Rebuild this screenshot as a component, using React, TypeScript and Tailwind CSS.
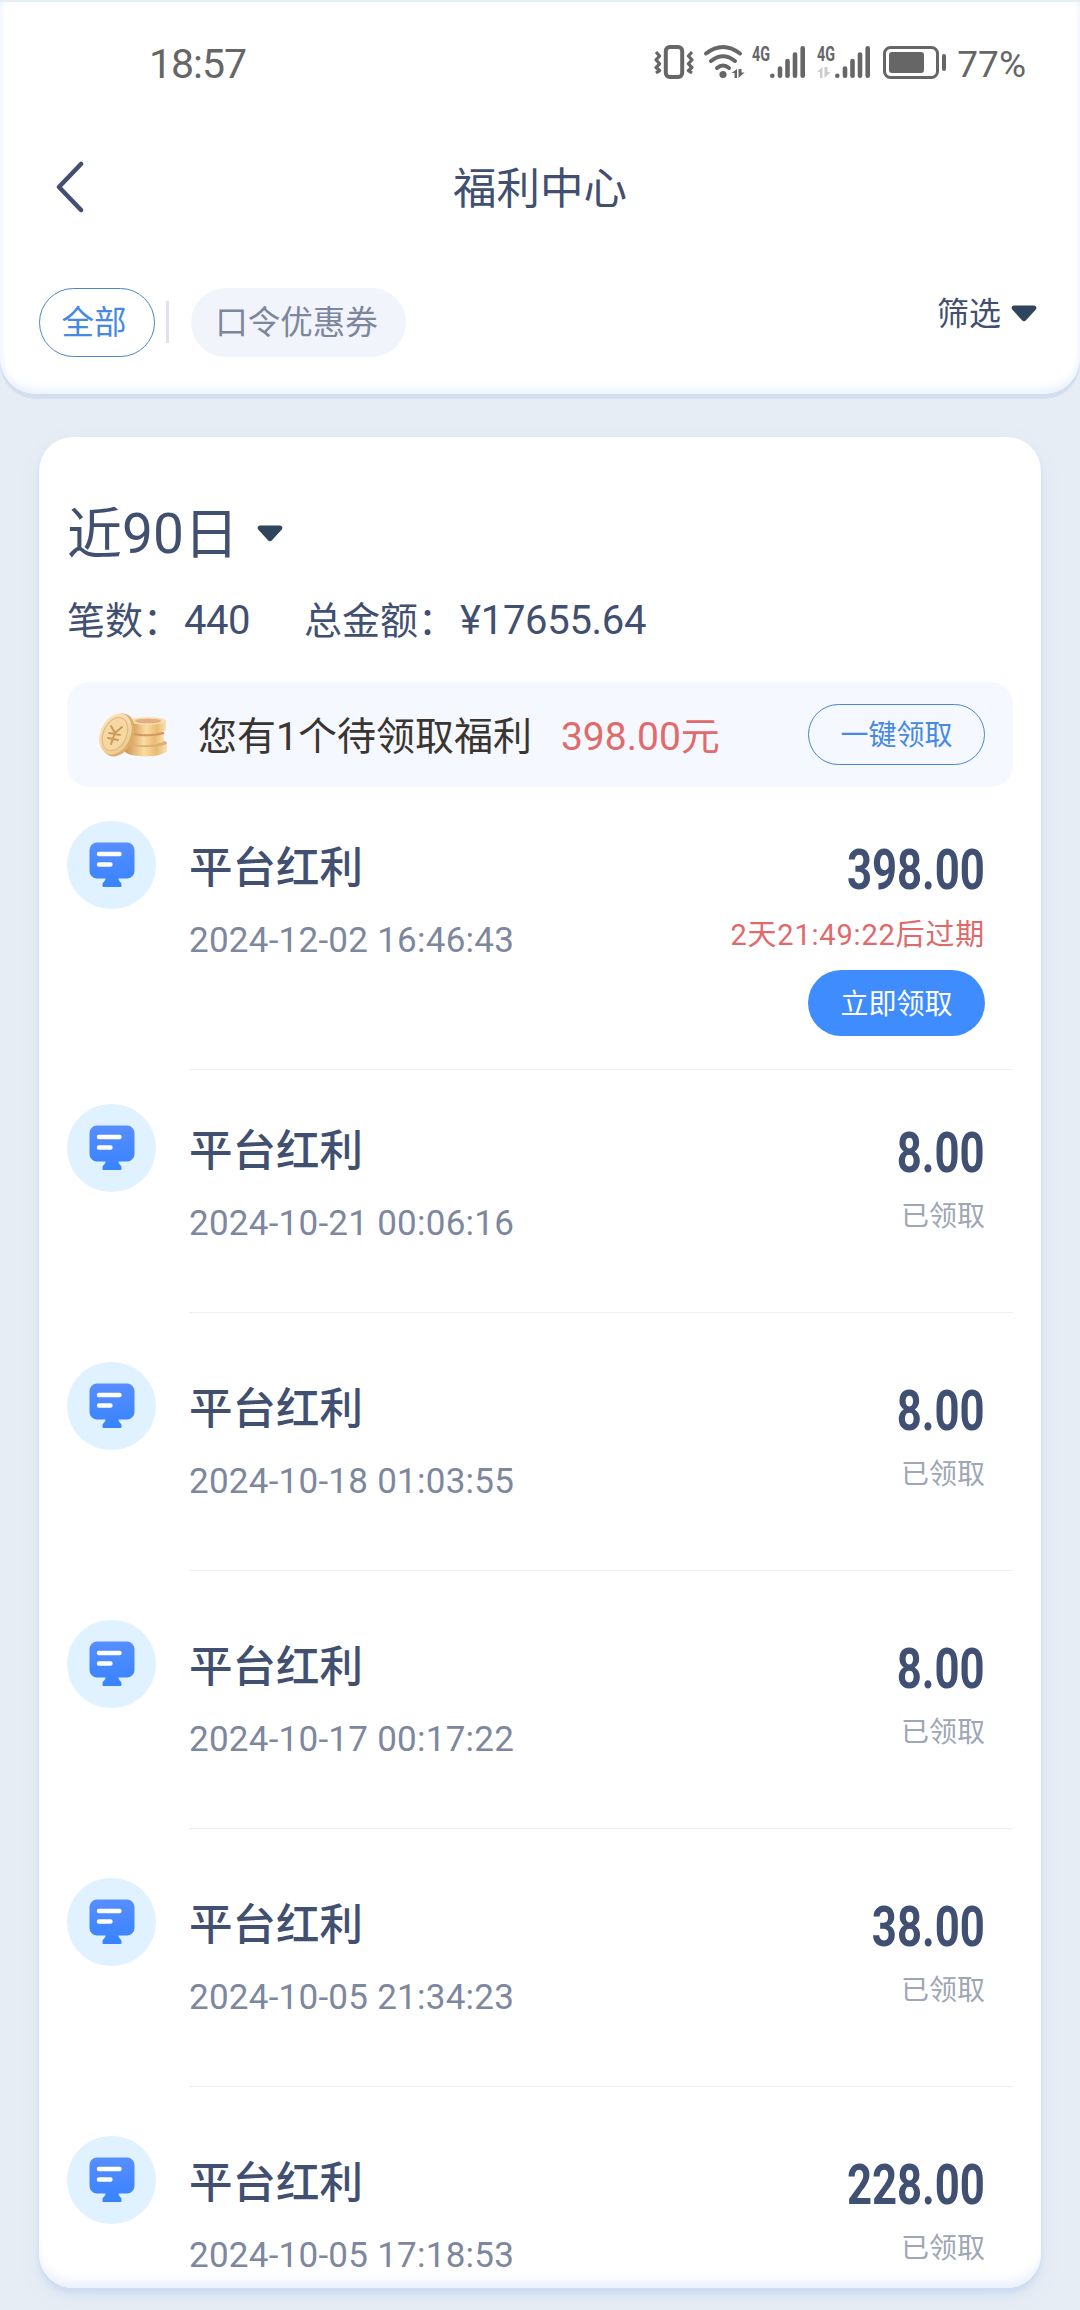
import clsx from 'clsx';

type Bonus = {
  time: string;
  amount: string;
  expire?: string;
};

const bonuses: Bonus[] = [
  { time: '2024-12-02 16:46:43', amount: '398.00', expire: '2天21:49:22后过期' },
  { time: '2024-10-21 00:06:16', amount: '8.00' },
  { time: '2024-10-18 01:03:55', amount: '8.00' },
  { time: '2024-10-17 00:17:22', amount: '8.00' },
  { time: '2024-10-05 21:34:23', amount: '38.00' },
  { time: '2024-10-05 17:18:53', amount: '228.00' },
];

function SignalBars() {
  return (
    <g strokeWidth="4.6" strokeLinecap="round">
      <path d="M2.3 30.7v.1M10 23.5v7.2M17.5 16v14.7M25 9.5v21.2M32.7 3.3v27.4" />
    </g>
  );
}

function StatusIcons() {
  return (
    <svg width="294" height="44" viewBox="0 -8 294 44" fill="none" stroke="#666" strokeLinejoin="round">
      {/* vibrate */}
      <rect x="11.8" y="2" width="16.4" height="30" rx="4" strokeWidth="4" />
      <path d="M2 7l3.6 4L2 14.8l3.6 4L2 22.6l3.6 3L2 28M38 7l-3.6 4 3.6 3.8-3.6 4 3.6 3.8-3.6 3L38 28" strokeWidth="3.2" />
      {/* wifi */}
      <g transform="translate(50 0)">
        <path d="M2 8.500Q19 -4.500 36 8.500M7 16Q19 6.500 31 16M13 23Q19 18 25 23" strokeWidth="4" strokeLinecap="round" />
        <circle cx="19" cy="29.500" r="3.600" fill="#666" stroke="none" />
        <path d="M27.500 28l5.500-4v9h-2.500v-5zM34.500 24v9l6-5.500h-3V24z" fill="#666" stroke="none" />
      </g>
      {/* sim 1 */}
      <text x="98" y="15.500" textLength="18" lengthAdjust="spacingAndGlyphs" fill="#666" stroke="none" className="text-[20px] font-bold">4G</text>
      <g transform="translate(116 0)">
        <SignalBars />
      </g>
      {/* sim 2 */}
      <text x="163" y="15.500" textLength="18" lengthAdjust="spacingAndGlyphs" fill="#666" stroke="none" className="text-[20px] font-bold">4G</text>
      <path d="M163 27l5.500-5v11H166v-6zM170.500 22v11l6-6h-3v-5z" fill="#ccc" stroke="none" />
      <g transform="translate(181 0)">
        <SignalBars />
      </g>
      {/* battery */}
      <rect x="230.500" y="2.500" width="53" height="30" rx="6" strokeWidth="3" />
      <rect x="235" y="7" width="35" height="21" rx="3" fill="#666" stroke="none" />
      <path d="M290 11v13" strokeWidth="4" strokeLinecap="round" />
    </svg>
  );
}

function Caret() {
  return (
    <svg width="26" height="17" viewBox="0 0 26 17" fill="#2f455c">
      <path d="M3.200 0.500h19.600c2.400 0 3.400 2.400 1.800 4.200l-9.400 10.300c-1.400 1.600-3 1.600-4.400 0L1.400 4.700C-0.200 2.900 0.800 0.500 3.200 0.500z" />
    </svg>
  );
}

function Coins() {
  return (
    <svg width="72" height="47" viewBox="0 0 72 47">
      <defs>
        <linearGradient id="edge" x1="0" x2="1" y1="0" y2="0">
          <stop offset="0" stopColor="#cf9350" />
          <stop offset="0.45" stopColor="#fbdc9f" />
          <stop offset="0.75" stopColor="#e9bb72" />
          <stop offset="1" stopColor="#f9e0b4" />
        </linearGradient>
        <linearGradient id="face" x1="0" x2="1" y1="0" y2="1">
          <stop offset="0" stopColor="#fce8c0" />
          <stop offset="1" stopColor="#ecc68b" />
        </linearGradient>
      </defs>
      <path d="M28 33v8c7 6 36 6 42-1v-9z" fill="url(#edge)" />
      <ellipse cx="49" cy="32" rx="21" ry="4" fill="#dcae74" />
      <path d="M30 22v9c6 5 32 4 37-1v-8z" fill="url(#edge)" />
      <ellipse cx="49" cy="22" rx="18.500" ry="3.200" fill="#d09a62" />
      <path d="M33 10v10c6 5 30 4 36-1V10z" fill="url(#edge)" />
      <ellipse cx="51" cy="10" rx="18" ry="3.800" fill="#f8dcae" />
      <ellipse cx="51" cy="10" rx="13" ry="2.300" fill="#e3ae84" />
      <ellipse cx="21" cy="24" rx="15.500" ry="22.500" transform="rotate(24 21 24)" fill="#dcae6a" />
      <ellipse cx="18.500" cy="23" rx="15" ry="21.500" transform="rotate(24 18.500 23)" fill="url(#face)" />
      <ellipse cx="18" cy="23" rx="11.500" ry="17.500" transform="rotate(24 18 23)" fill="#f5d8a2" stroke="#e3bb80" strokeWidth="1.200" />
      <path d="M14 15l4 7 7-6M18 22l-4 11M12 22l11 2M11 27l10 2" stroke="#cd9a5a" strokeWidth="2" fill="none" strokeLinecap="round" />
    </svg>
  );
}

function PlatformIcon() {
  return (
    <div className="flex h-[88px] w-[89px] shrink-0 items-center justify-center rounded-full bg-[#e0f2ff]">
      <svg width="46" height="46" viewBox="0 0 46 46">
        <defs>
          <linearGradient id="screen" x1="0" x2="0" y1="0" y2="1">
            <stop offset="0" stopColor="#578eff" />
            <stop offset="1" stopColor="#3783ff" />
          </linearGradient>
        </defs>
        <path
          d="M8 .5h30a7.500 7.500 0 0 1 7.500 7.500v21a7.500 7.500 0 0 1-7.500 7.500h-8.500c0 3 3 3.500 3 6v1.500a1 1 0 0 1-1 1H14.500a1 1 0 0 1-1-1v-1.500c0-2.500 3-3 3-6H8A7.500 7.500 0 0 1 .5 29V8A7.500 7.500 0 0 1 8 .5z"
          fill="url(#screen)"
        />
        <path d="M10 12h20.500M10 22.500h11.500" stroke="#fff" strokeWidth="4.400" strokeLinecap="round" />
      </svg>
    </div>
  );
}

function BonusRow({ item, last }: { item: Bonus; last: boolean }) {
  return (
    <div className={clsx('flex', item.expire ? 'mb-[34px]' : 'mb-[49px]')}>
      <PlatformIcon />
      <div
        className={clsx(
          'ml-[33px] flex flex-1 justify-between pr-7',
          item.expire ? 'h-[249px]' : 'h-[209px]',
          !last && 'border-b border-[#eeeff1]',
        )}
      >
        <div className="pt-[18px]">
          <div className="h-[60px] text-[43.5px] leading-[60px] font-medium text-[#414f70]">平台红利</div>
          <div className="mt-[17px] h-[50px] text-[35px] leading-[50px] tracking-[0.25px] whitespace-nowrap text-[#7d879e]">
            {item.time}
          </div>
        </div>
        <div className="flex flex-col items-end pt-[19px]">
          <div className="h-[60px] origin-right scale-x-[0.78] text-[56px] leading-[60px] font-bold text-[#3f5073]">
            {item.amount}
          </div>
          {item.expire ? (
            <>
              <div className="mt-[15px] h-10 text-[29px] leading-10 tracking-[0.8px] whitespace-nowrap text-[#e06a6a]">
                {item.expire}
              </div>
              <button className="mt-[15px] h-[66px] w-[177px] rounded-full bg-[#3f8cff] pt-[3px] text-[28px] leading-[63px] text-white">
                立即领取
              </button>
            </>
          ) : (
            <div className="mt-[14px] h-10 text-[28px] leading-10 text-[#9fa6b4]">已领取</div>
          )}
        </div>
      </div>
    </div>
  );
}

export default function App() {
  return (
    <div className="h-[2310px] w-[1080px] overflow-hidden bg-[#e6edf5] pt-[2px] font-[Roboto,'Noto_Sans_CJK_SC',sans-serif]">
      <header className="h-[392px] rounded-b-[36px] bg-white shadow-[0_5px_1px_#d3dfee,inset_0_-10px_12px_-6px_#e8f0fd,inset_3px_0_6px_-2px_#f0f4ff,inset_-3px_0_6px_-2px_#f0f4ff]">
        <div className="flex h-[124px] justify-between pr-[54px] pl-[149px] text-[#666]">
          <span className="pt-[37px] text-[41px] leading-[50px] tracking-[-1px]">18:57</span>
          <div className="flex gap-[9px] pt-[35px]">
            <StatusIcons />
            <span className="pt-[9px] text-[37px] leading-[38px]">77%</span>
          </div>
        </div>

        <div className="grid h-[122px] grid-cols-3 items-center px-14 text-[#414f70]">
          <svg width="28" height="52" viewBox="0 0 28 52" fill="none" stroke="#434f70" strokeWidth="4.500" strokeLinecap="round" strokeLinejoin="round">
            <path d="M25 3L3 26l22 23" />
          </svg>
          <h1 className="pt-[6px] text-center text-[43.5px] leading-[60px]">福利中心</h1>
        </div>

        <div className="mt-10 flex items-start pr-[43px] pl-[39px]">
          <button className="h-[69px] w-[116px] rounded-full border border-[#4a86d0] pt-px pr-1.5 text-[32.5px] leading-[66px] text-[#4688e3]">全部</button>
          <span className="mt-[13px] ml-[11px] h-[42px] w-[3px] bg-[#dfe3e8]" />
          <button className="ml-[22px] h-[69px] w-[215px] rounded-full bg-[#f1f4fa] pt-px pr-1 text-[32.5px] leading-[66px] text-[#7c869d]">口令优惠券</button>
          <div className="mt-[4px] ml-auto flex items-center gap-2.5 text-[#414f70]">
            <span className="pt-[2px] text-[32px] leading-10">筛选</span>
            <Caret />
          </div>
        </div>
      </header>

      <main className="mx-[39px] mt-[43px] h-[1851px] overflow-hidden rounded-[34px] bg-white px-7 pt-[60px] shadow-[0_5px_5px_#cddcf0,0_8px_20px_#dbe3f1,inset_0_-12px_12px_-6px_#e8effc]">
        <div className="flex h-[72px] items-center gap-[18px] text-[#414f70]">
          <h2 className="pt-[2px] text-[55px] leading-[72px]">近90日</h2>
          <Caret />
        </div>
        <div className="mt-[26px] flex h-[52px] gap-[54px] text-[38px] leading-[52px] text-[#414f70]">
          <span>
            笔数：<span className="ml-[3px] text-[40px] tracking-[-0.5px]">440</span>
          </span>
          <span>
            总金额：<span className="ml-[4px] text-[40px] tracking-[-0.3px]">¥17655.64</span>
          </span>
        </div>

        <div className="mt-[35px] mb-[34px] flex h-[105px] items-center rounded-[22px] bg-[#f5f8ff] pr-7 pl-[30px]">
          <Coins />
          <span className="ml-[29px] pt-[6px] text-[39px] text-[#3a3530]">您有1个待领取福利</span>
          <span className="ml-[29px] pt-[6px] text-[39px] text-[#e16a6a]">398.00元</span>
          <button className="ml-auto h-[61px] w-[177px] rounded-full border border-[#4a86d0] pt-[3px] text-[28px] leading-[56px] text-[#4688e3]">
            一键领取
          </button>
        </div>

        {bonuses.map((b, i) => (
          <BonusRow key={b.time} item={b} last={i === bonuses.length - 1} />
        ))}
      </main>
    </div>
  );
}
